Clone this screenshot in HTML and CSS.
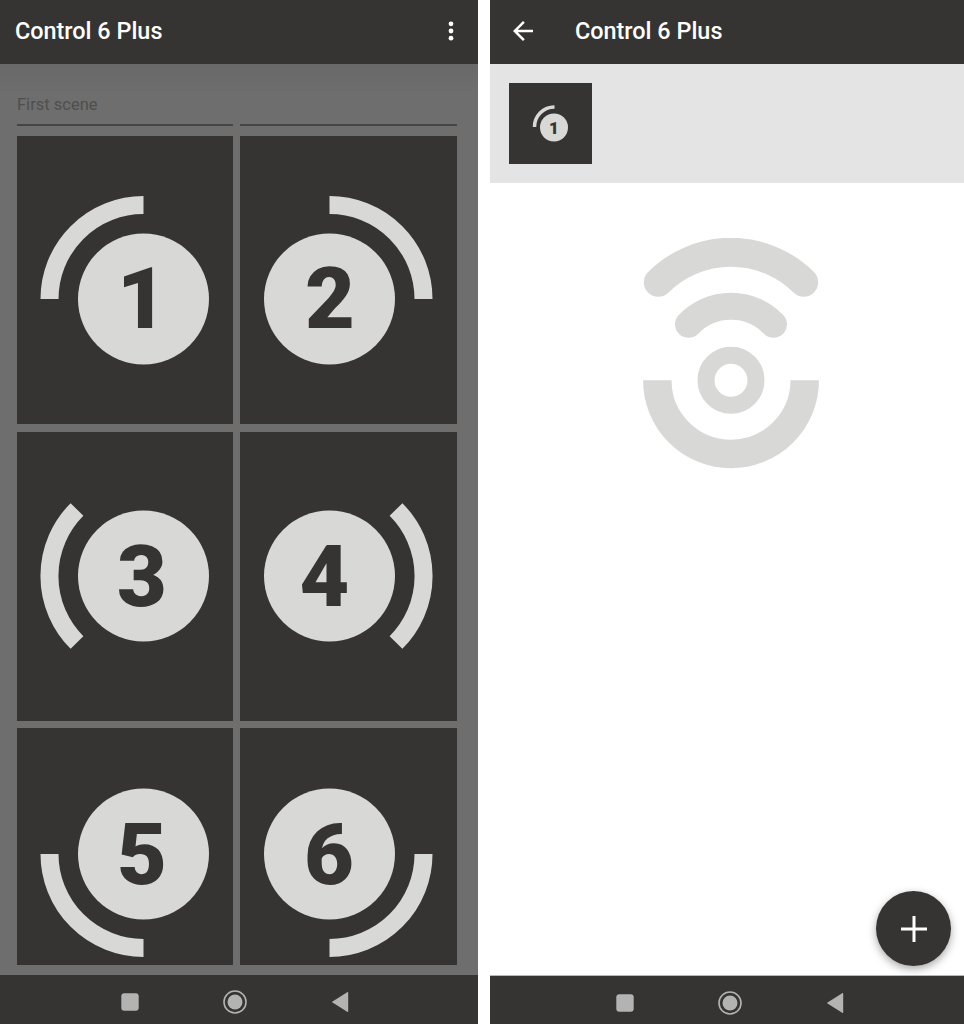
FILE: index.html
```html
<!DOCTYPE html>
<html lang="en">
<head>
  <meta charset="UTF-8">
  <title>Control 6 Plus</title>
  <link rel="stylesheet" href="styles.css">
</head>
<body>

<div class="phones">

  <div class="phone phone-left">
    <div class="appbar">
      <span class="title">Control 6 Plus</span>
      <svg class="menu" width="6" height="20" viewBox="0 0 6 20">
        <circle cx="3" cy="2.8" r="2.4"/>
        <circle cx="3" cy="10" r="2.4"/>
        <circle cx="3" cy="17.2" r="2.4"/>
      </svg>
    </div>

    <div class="scene">
      <div class="field">First scene</div>
      <div class="field"></div>

      <div class="tile">
        <svg width="216" height="288" viewBox="0 0 216 288">
          <path class="arc" d="M32.5 163A94 94 0 0 1 126.5 69"/>
          <circle class="disc" cx="126.5" cy="163" r="65.5"/>
          <text class="digit" x="125" y="192">1</text>
        </svg>
      </div>
      <div class="tile">
        <svg width="216" height="288" viewBox="0 0 216 288">
          <path class="arc" d="M89.5 69A94 94 0 0 1 183.5 163"/>
          <circle class="disc" cx="89.5" cy="163" r="65.5"/>
          <text class="digit" x="90" y="192">2</text>
        </svg>
      </div>
      <div class="tile">
        <svg width="216" height="289" viewBox="0 0 216 289">
          <path class="arc" d="M60 77.5A94 94 0 0 0 60 210.5"/>
          <circle class="disc" cx="126.5" cy="144" r="65.5"/>
          <text class="digit" x="125" y="174">3</text>
        </svg>
      </div>
      <div class="tile">
        <svg width="216" height="289" viewBox="0 0 216 289">
          <path class="arc" d="M156 77.5A94 94 0 0 1 156 210.5"/>
          <circle class="disc" cx="89.5" cy="144" r="65.5"/>
          <text class="digit" x="84.5" y="174">4</text>
        </svg>
      </div>
      <div class="tile">
        <svg width="216" height="237" viewBox="0 0 216 237">
          <path class="arc" d="M32.5 126A94 94 0 0 0 126.5 220"/>
          <circle class="disc" cx="126.5" cy="126" r="65.5"/>
          <text class="digit" x="125" y="156">5</text>
        </svg>
      </div>
      <div class="tile">
        <svg width="216" height="237" viewBox="0 0 216 237">
          <path class="arc" d="M89.5 220A94 94 0 0 0 183.5 126"/>
          <circle class="disc" cx="89.5" cy="126" r="65.5"/>
          <text class="digit" x="89" y="156">6</text>
        </svg>
      </div>
    </div>

    <div class="navbar navbar-left">
      <svg width="24" height="24" viewBox="0 0 24 24"><rect x="3.3" y="3.3" width="17.4" height="17.4" rx="3"/></svg>
      <svg width="24" height="24" viewBox="0 0 24 24"><circle class="ring" cx="12" cy="12" r="11"/><circle cx="12" cy="12" r="7.5"/></svg>
      <svg width="24" height="24" viewBox="0 0 24 24"><path d="M20.2 2.6V21.4a.6.6 0 0 1-1 .4L4.5 12.6a.7.7 0 0 1 0-1.2L19.2 2.2a.6.6 0 0 1 1 .4z"/></svg>
    </div>
  </div>

  <div class="phone phone-right">
    <div class="appbar">
      <svg class="back" width="30" height="30" viewBox="0 0 24 24">
        <path d="M20 11H7.83l5.59-5.59L12 4l-8 8 8 8 1.41-1.41L7.83 13H20v-2z"/>
      </svg>
      <span class="title">Control 6 Plus</span>
    </div>

    <div class="strip">
      <div class="thumb">
        <svg width="83" height="81" viewBox="0 0 83 81">
          <path class="arc-small" d="M25.500 44A20 20 0 0 1 45.500 24"/>
          <circle class="disc" cx="45" cy="44.500" r="14"/>
          <text class="digit-small" x="45" y="50.500">1</text>
        </svg>
      </div>
    </div>

    <div class="empty">
      <svg width="200" height="250" viewBox="0 0 200 250">
        <path class="wave wave-top" d="M27.300 44.300A103 103 0 0 1 172.700 44.300"/>
        <path class="wave wave-mid" d="M57.500 86.300A59 59 0 0 1 142.500 86.300"/>
        <circle class="dot-ring" cx="100" cy="142.300" r="25"/>
        <path class="cup" d="M26.300 142.300A73.700 73.700 0 0 0 173.700 142.300"/>
      </svg>
    </div>

    <div class="fab">
      <svg width="28" height="28" viewBox="0 0 28 28"><path d="M12.500 1h3v11.500H27v3H15.500V27h-3V15.500H1v-3h11.500z"/></svg>
    </div>

    <div class="navbar navbar-right">
      <svg width="24" height="24" viewBox="0 0 24 24"><rect x="3.300" y="3.300" width="17.400" height="17.400" rx="3"/></svg>
      <svg width="24" height="24" viewBox="0 0 24 24"><circle class="ring" cx="12" cy="12" r="11"/><circle cx="12" cy="12" r="7.500"/></svg>
      <svg width="24" height="24" viewBox="0 0 24 24"><path d="M20.200 2.600V21.400a.6.6 0 0 1-1 .4L4.500 12.600a.7.7 0 0 1 0-1.200L19.200 2.200a.6.6 0 0 1 1 .4z"/></svg>
    </div>
  </div>

</div>

</body>
</html>
```

FILE: styles.css
```css
body {
  margin: 0;
  background: #fff;
  font-family: Roboto, "Liberation Sans", sans-serif;
}

.phones {
  display: flex;
  gap: 12px;
  width: 964px;
  height: 1024px;
  overflow: hidden;
}

.phone {
  position: relative;
  display: flex;
  flex-direction: column;
  height: 1024px;
}
.phone-left { width: 478px; background: #6e6e6e; }
.phone-right { width: 474px; background: #fff; }

.appbar {
  display: flex;
  align-items: center;
  flex: none;
  box-sizing: border-box;
  height: 64px;
  padding-bottom: 2px;
  background: #353433;
  color: #fff;
}
.title {
  font-size: 23.400px;
  font-weight: 500;
}
.phone-left .appbar { padding-left: 15px; padding-right: 24px; justify-content: space-between; }
.phone-right .title { margin-left: 35px; }
.menu { fill: #fff; }
.back { fill: #fff; margin-left: 18px; margin-right: 2px; }

/* left screen */
.scene {
  flex: 1;
  display: grid;
  grid-template-columns: 216px 217px;
  grid-template-rows: 30px 288px 289px 237px;
  column-gap: 7px;
  row-gap: 7.500px;
  padding: 34.500px 0 0 17px;
  min-height: 0;
  background: linear-gradient(#696969, #6e6e6e 30px);
}
.field {
  border-bottom: 2px solid #454545;
  margin-bottom: 2.500px;
  font-size: 16.500px;
  line-height: 12px;
  color: #4f4f4f;
}
.tile {
  background: #353433;
  overflow: hidden;
}
.tile svg { display: block; }

.arc {
  fill: none;
  stroke: #d8d8d6;
  stroke-width: 18;
}
.disc { fill: #d8d8d6; }
.digit {
  font-family: Roboto, sans-serif;
  font-size: 86px;
  font-weight: 900;
  fill: #353433;
  text-anchor: middle;
}

/* right screen */
.strip {
  flex: none;
  height: 119px;
  padding: 19px 0 0 19px;
  box-sizing: border-box;
  background: #e4e4e4;
}
.thumb {
  width: 83px;
  height: 81px;
  background: #353433;
}
.thumb svg { display: block; }
.arc-small {
  fill: none;
  stroke: #d8d8d6;
  stroke-width: 3.500;
}
.digit-small {
  font-family: Roboto, sans-serif;
  font-size: 17px;
  font-weight: 900;
  fill: #353433;
  text-anchor: middle;
}

.empty {
  flex: 1;
  display: flex;
  justify-content: center;
  padding: 55px 0 0 0;
  min-height: 0;
}
.empty svg { margin-left: 8px; }
.wave {
  fill: none;
  stroke: #d8d8d6;
  stroke-linecap: round;
}
.wave-top { stroke-width: 29; }
.wave-mid { stroke-width: 27; }
.dot-ring {
  fill: none;
  stroke: #d8d8d6;
  stroke-width: 17;
}
.cup {
  fill: none;
  stroke: #d8d8d6;
  stroke-width: 28.500;
}

.fab {
  position: absolute;
  right: 13px;
  bottom: 58px;
  display: flex;
  align-items: center;
  justify-content: center;
  width: 75px;
  height: 75px;
  border-radius: 50%;
  background: #353433;
  box-shadow: 0 3px 8px rgba(0, 0, 0, 0.35);
}
.fab svg { fill: #fff; }

/* bottom bar */
.navbar {
  flex: none;
  display: flex;
  align-items: center;
  gap: 81px;
  box-sizing: border-box;
  height: 49px;
  background: #353433;
}
.navbar svg { fill: #b3b3b3; }
.navbar .ring {
  fill: none;
  stroke: #b3b3b3;
  stroke-width: 1.600;
}
.navbar-left { padding: 5px 0 0 118px; }
.navbar-right { padding: 5px 0 0 123px; border-top: 1px solid #b8b8b8; }
```
